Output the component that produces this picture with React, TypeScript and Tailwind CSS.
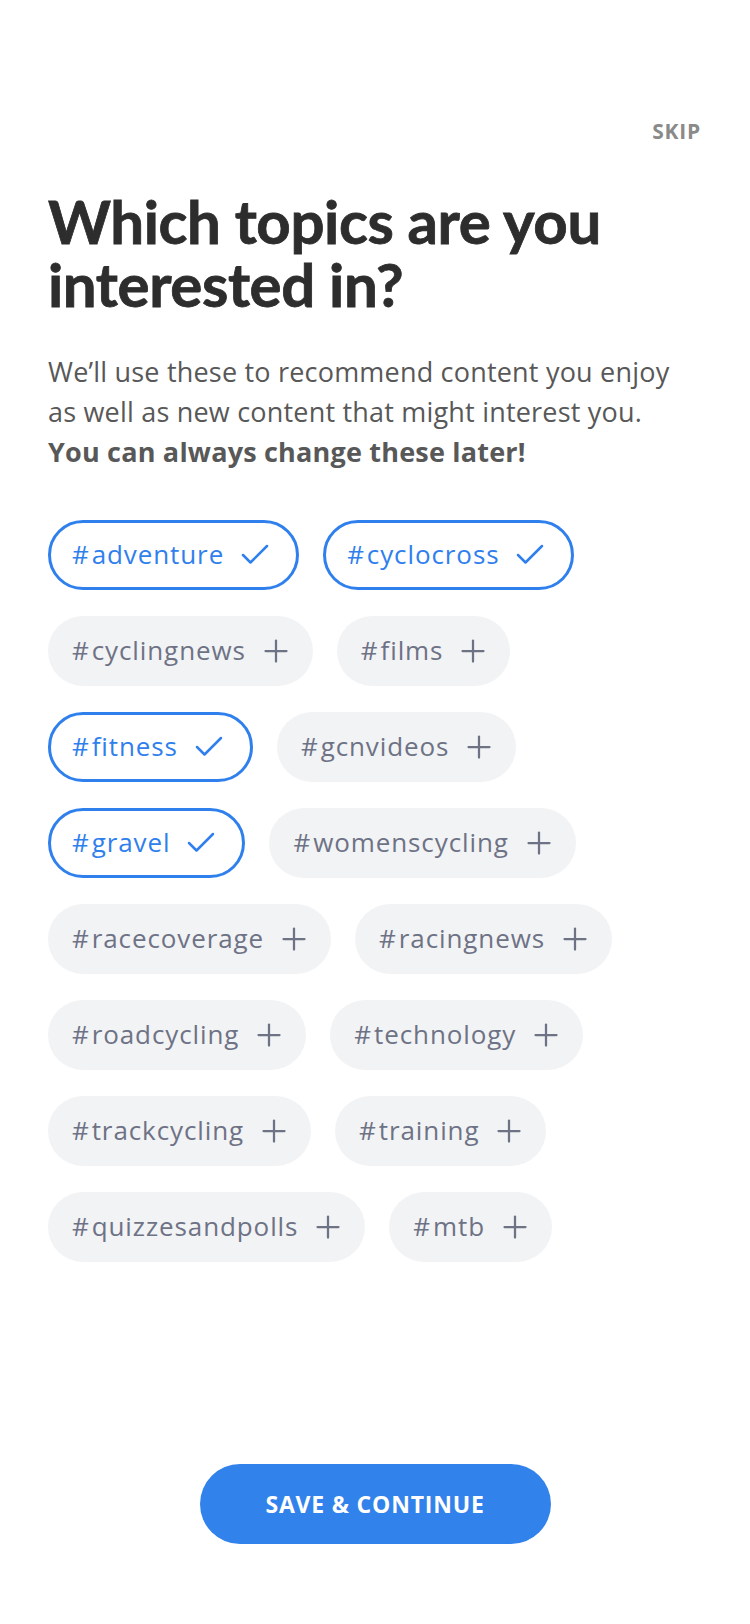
import { Check, Plus } from "lucide-react";

const rows: { tag: string; on?: boolean }[][] = [
  [{ tag: "adventure", on: true }, { tag: "cyclocross", on: true }],
  [{ tag: "cyclingnews" }, { tag: "films" }],
  [{ tag: "fitness", on: true }, { tag: "gcnvideos" }],
  [{ tag: "gravel", on: true }, { tag: "womenscycling" }],
  [{ tag: "racecoverage" }, { tag: "racingnews" }],
  [{ tag: "roadcycling" }, { tag: "technology" }],
  [{ tag: "trackcycling" }, { tag: "training" }],
  [{ tag: "quizzesandpolls" }, { tag: "mtb" }],
];

function Chip({ tag, on }: { tag: string; on?: boolean }) {
  return (
    <button
      className={`h-[70px] rounded-full flex items-center text-[26px] tracking-[0.9px] ${
        on
          ? "pl-[21px] pr-[23px] border-[3px] border-[#2f80ed] text-[#2f80ed] bg-white"
          : "pl-[24px] pr-[19px] bg-[#f2f3f5] text-[#6e7285]"
      }`}
    >
      <span>
        <span className="mr-[2px]">#</span>
        {tag}
      </span>
      {on ? (
        <Check className="ml-[13px] w-[36px] h-[36px]" strokeWidth={1.7} />
      ) : (
        <Plus className="ml-[12px] w-[36px] h-[36px]" strokeWidth={1.5} />
      )}
    </button>
  );
}

export default function App() {
  return (
    <div
      className="min-h-[1624px] bg-white flex flex-col px-[48px]"
      style={{ fontFamily: "'Open Sans', 'Noto Sans', sans-serif" }}
    >
      <div className="pt-[116px] flex justify-end pr-[1px]">
        <button className="text-[21px] font-bold tracking-[0.8px] text-[#8a8a8a]">SKIP</button>
      </div>

      <h1
        className="mt-[42px] text-[60px] leading-[63px] font-bold text-[#2d2d2d] tracking-[-0.4px] [-webkit-text-stroke:0.8px_#2d2d2d]"
        style={{ fontFamily: "Lato, sans-serif" }}
      >
        Which topics are you
        <br />
        interested in?
      </h1>

      <p className="mt-[36px] text-[27px] leading-[40px] tracking-[0.2px] text-[#585858]">
        We’ll use these to recommend content you enjoy as well as new content that might interest you.
        <br />
        <span className="font-bold">You can always change these later!</span>
      </p>

      <div className="mt-[48px] flex flex-col gap-[26px]">
        {rows.map((row, i) => (
          <div key={i} className="flex gap-[24px]">
            {row.map((c) => (
              <Chip key={c.tag} tag={c.tag} on={c.on} />
            ))}
          </div>
        ))}
      </div>

      <div className="mt-auto pb-[80px] flex justify-center">
        <button className="w-[351px] h-[80px] rounded-full bg-[#3182eb] text-white text-[23px] font-bold tracking-[0.8px]">
          SAVE &amp; CONTINUE
        </button>
      </div>
    </div>
  );
}
